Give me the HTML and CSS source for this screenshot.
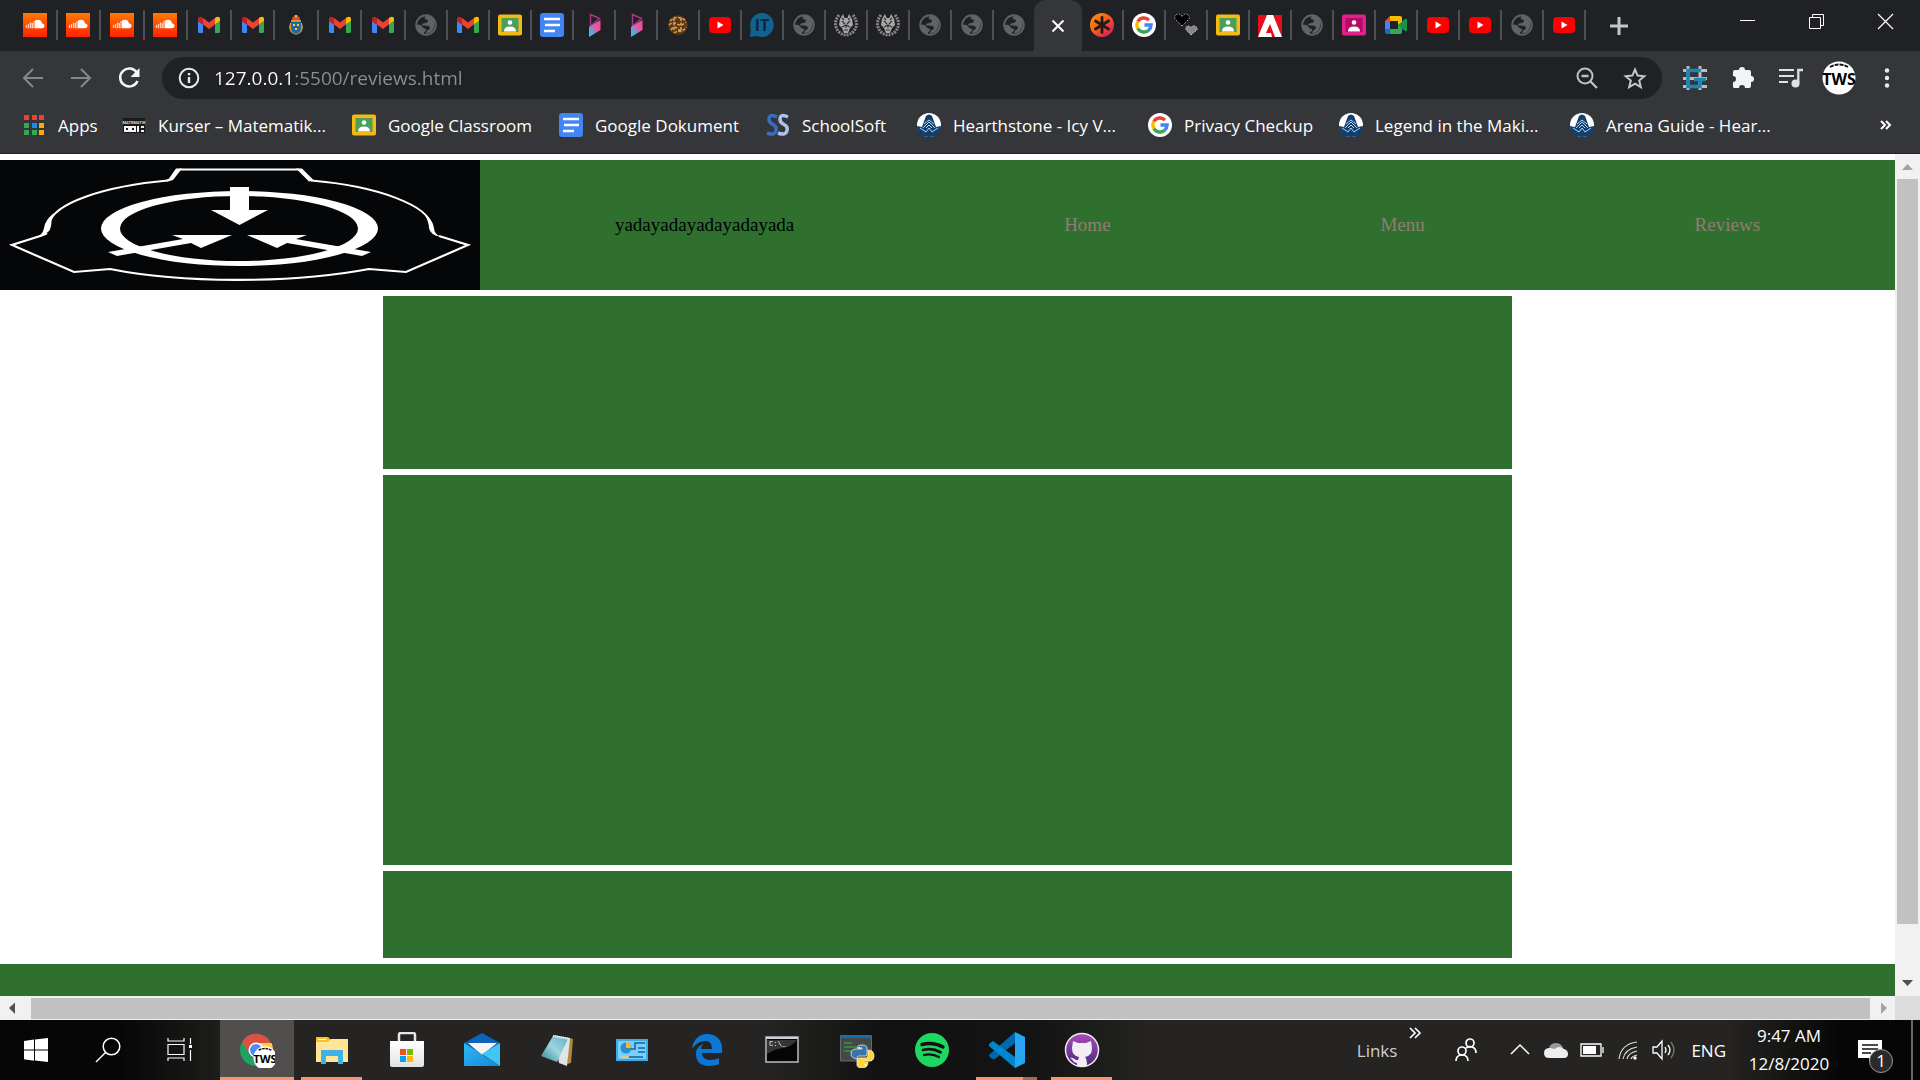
FILE: index.html
```html
<!DOCTYPE html>
<html lang="en">
<head>
<meta charset="utf-8">
<meta name="viewport" content="width=device-width, initial-scale=1">
<title>Reviews</title>
<link rel="stylesheet" href="styles.css">
</head>
<body>
<svg class="sprite" aria-hidden="true">
  <defs>
    <linearGradient id="g-sc" x1="0" y1="0" x2="0" y2="1"><stop offset="0" stop-color="#ff7a00"/><stop offset="1" stop-color="#ff2000"/></linearGradient>
    <linearGradient id="g-prism" x1="1" y1="0" x2="0" y2="1"><stop offset=".35" stop-color="#f0509a"/><stop offset=".9" stop-color="#2cc4ee"/></linearGradient>
    <linearGradient id="g-ast" x1="0" y1="0" x2="1" y2="1"><stop offset="0" stop-color="#ffa000"/><stop offset=".5" stop-color="#f4581f"/><stop offset="1" stop-color="#c60f6c"/></linearGradient>
    <linearGradient id="g-mail" x1="0" y1="0" x2="1" y2="1"><stop offset="0" stop-color="#30b8f2"/><stop offset="1" stop-color="#1487dc"/></linearGradient>
    <linearGradient id="g-note" x1="0" y1="1" x2="1" y2="0"><stop offset="0" stop-color="#2c8592"/><stop offset=".5" stop-color="#9bd6df"/><stop offset="1" stop-color="#5fb0bd"/></linearGradient>
    <linearGradient id="g-git" x1="0" y1="0" x2="0" y2="1"><stop offset="0" stop-color="#a94bb8"/><stop offset="1" stop-color="#4c2a80"/></linearGradient>
    <linearGradient id="g-bag" x1="0" y1="0" x2="0" y2="1"><stop offset="0" stop-color="#fff"/><stop offset="1" stop-color="#e2e2e2"/></linearGradient>
    <symbol id="i-sc" viewBox="0 0 24 24"><path fill="url(#g-sc)" d="M0 0h24v24H0z"/><path fill="#fff" d="M12 7.500c4-2 6.700 0 7 3 1.500-.2 2.500.8 2.500 2.200 0 1.500-1 2.500-2.500 2.500h-7z"/><path stroke="#fff" stroke-opacity=".75" stroke-width="1.300" d="M3.500 12v3M5.500 11v4.300M7.500 9.500v5.800M9.300 10v5.300M11 8v7.300"/></symbol>
    <symbol id="i-gmail" viewBox="0 0 24 24"><path fill="#4285f4" d="M1 8l5 3.500V20H2.500Q1 20 1 18.500z"/><path fill="#34a853" d="M18 11.500L23 8v10.500q0 1.500-1.500 1.500H18z"/><path fill="#c5221f" d="M1 8V6c0-2 2-3 4-1.700l1 .8v6.400z"/><path fill="#fbbc04" d="M23 8V6c0-2-2-3-4-1.700l-1 .8v6.400z"/><path fill="#ea4335" d="M6 5l6 4.500L18 5v6.500L12 16l-6-4.500z"/></symbol>
    <symbol id="i-crest" viewBox="0 0 24 24"><path fill="#d94a36" d="M8 6q0-3 4-3t4 3l-1 2H9z"/><path d="M12 2v3M10.500 3h3M7 8h10" stroke="#e8b63a" stroke-width="1.500"/><path fill="#c59a33" d="M6 10l2-1h8l2 1 1 4-1 4-2 2-4 2-4-2-2-2-1-4z"/><path fill="#1d6aa0" d="M7 9h10v7q-1 4-5 5-4-1-5-5z"/><path fill="#f6cd47" d="M9 11h2v2H9zm4 0h2v2h-2zm-2 4h2v2h-2z"/></symbol>
    <symbol id="i-globe" viewBox="0 0 24 24"><circle cx="12" cy="12" r="9.800" fill="none" stroke="#5f6368" stroke-width="1.900"/><path fill="#5f6368" d="M13 2q-3 2-2 4l3 1q0 3-3 3l-3 1q0 2 3 1.500l4 .5 1 2q-1 2-3 2.500l-1 3q6 0 8-6.500 2-7-3-10-2-2-4-2zM2 12q4-1 6 1l1 2 3 1v2l-2 1v3q-7-2-8-10z"/></symbol>
    <symbol id="i-class" viewBox="0 0 24 24"><rect y="1.500" width="24" height="21" rx="2" fill="#f4b912"/><path fill="#4b9f5b" d="M3.500 5h17v14h-17z"/><circle cx="12" cy="9.500" r="2.300" fill="#fff"/><path fill="#fff" d="M6 18.500q0-5 6-5t6 5z"/></symbol>
    <symbol id="i-pclass" viewBox="0 0 24 24"><rect y="1.500" width="24" height="21" rx="2" fill="#e0218a"/><path fill="#b10b68" d="M3.500 5h17v14h-17z"/><circle cx="12" cy="9.500" r="2.300" fill="#fff"/><path fill="#fff" d="M6 18.500q0-5 6-5t6 5z"/></symbol>
    <symbol id="i-docs" viewBox="0 0 24 24"><rect width="24" height="24" rx="3" fill="#4285f4"/><path stroke="#fff" stroke-width="2.500" d="M4 6h16M5 12h15M4 18h11"/></symbol>
    <symbol id="i-prism" viewBox="0 0 24 24"><path fill="none" stroke="#a8367f" stroke-width="1.500" d="M8.500 1.500v11.500l9-7.500z"/><path fill="url(#g-prism)" d="M18.500 7v10L7 24V14z"/></symbol>
    <symbol id="i-cookie" viewBox="0 0 24 24"><circle cx="12" cy="12" r="9.800" fill="#5d3818"/><path fill="none" stroke="#d7a55c" stroke-width="1.500" stroke-dasharray="3 1.500" d="M4 8q8-7 16 0M3 12q4-4 8-1t9-2M5 17q3-5 7-1t8-2M8 20q4-3 8-1M8 5v13M15 5v14"/></symbol>
    <symbol id="i-yt" viewBox="0 0 24 24"><rect x="1" y="4" width="22" height="16" rx="4" fill="#f00"/><path fill="#fff" d="M9.500 8.500v7l6-3.500z"/></symbol>
    <symbol id="i-it" viewBox="0 0 24 24"><path fill="#10628f" d="M12 0a12 12 0 1 1-5 23l-7 1 .8-8A12 12 0 0 1 12 0z"/><text x="12" y="18" text-anchor="middle" font-family="Open Sans, sans-serif" font-weight="700" font-size="16" fill="#10263a">IT</text></symbol>
    <symbol id="i-wreath" viewBox="0 0 24 24"><path fill="none" stroke="#888" stroke-width="3" stroke-dasharray="2 1" d="M5 2q-7 9 0 17 7 6 14 0 7-8 0-17"/><path fill="#a8a8a8" d="M6 6l3-5 1.500 4h3L15 1l3 5 1 6-3 3-2 5h-4l-2-5-3-3z"/><path fill="none" stroke="#303236" stroke-width="1.200" d="M8 8l3 3M16 8l-3 3M12 12v3M8 14l4-2 4 2M10 17h4M8 5l2 2M16 5l-2 2"/></symbol>
    <symbol id="i-ast" viewBox="0 0 24 24"><circle cx="12" cy="12" r="12" fill="url(#g-ast)"/><path stroke="#26191c" stroke-width="2.800" stroke-linecap="round" d="M12 4.500v15M5.500 8l13 8M18.500 8l-13 8"/></symbol>
    <symbol id="i-g" viewBox="0 0 24 24"><circle cx="12" cy="12" r="12" fill="#fff"/><g fill="none" stroke-width="3.400"><path stroke="#ea4335" d="M5.900 8.500A7 7 0 0 1 17 7.100"/><path stroke="#fbbc05" d="M5.900 8.500a7 7 0 0 0 0 7"/><path stroke="#34a853" d="M5.900 15.500A7 7 0 0 0 16.700 17.200"/><path stroke="#4285f4" d="M12.500 12h6.600a7 7 0 0 1-2.500 5.200"/></g></symbol>
    <symbol id="i-hearts" viewBox="0 0 24 24"><path fill="#000" stroke="#ddd" stroke-dasharray="1 1.500" d="M8 13L1 6q-1-4 3-5 3 0 4 3 1-3 4-3 4 1 3 5z"/><path fill="#888" stroke="#ddd" stroke-dasharray="1 1.500" d="M17 22l-5-5q-1-4 2-4 3 0 3 2 1-3 4-2 3 1 2 4z"/></symbol>
    <symbol id="i-adobe" viewBox="0 0 24 24"><path fill="#e1101c" d="M0 2h24v22H0z"/><path fill="#fff" d="M9 2h6l9 22h-7l-5-13-4 9h5l1 4H0z"/></symbol>
    <symbol id="i-meet" viewBox="0 0 24 24"><path fill="#fbbc04" d="M6 3h10q2 0 2 2v6l-4 3V8H6z"/><path fill="#ea4335" d="M6 3v5H1z"/><path fill="#4285f4" d="M1 8h5v8H1z"/><path fill="#1967d2" d="M1 16h5v5H3q-2 0-2-2z"/><path fill="#34a853" d="M6 16h8v-4l4-1v8q0 2-2 2H6z"/><path fill="#159447" d="M14 12l7-6q2-1 2 1v10q0 2-2 1z"/></symbol>
    <symbol id="i-apps" viewBox="0 0 24 24"><path fill="#ea4335" d="M2 2h5v5H2zm8 0h5v5h-5zm7 0h5v5h-5z"/><path fill="#34a853" d="M2 10h5v5H2zm0 7h5v5H2zm8 0h5v5h-5z"/><path fill="#1e88f5" d="M10 10h5v5h-5z"/><path fill="#fbab09" d="M17 10h5v5h-5zm0 7h5v5h-5z"/></symbol>
    <symbol id="i-mat" viewBox="0 0 24 24"><path fill="#191919" d="M1 5h22v15H1z"/><text x="12" y="11" text-anchor="middle" font-family="Roboto, sans-serif" font-weight="700" font-size="4" fill="#ddd">MATEMATIK</text><path fill="none" stroke="#f4f4f4" stroke-width="2" d="M3 14h4v4H3zM9 14h4v4H9zM16 13v6M19 14h3M19 18h3"/></symbol>
    <symbol id="i-ss" viewBox="0 0 24 24"><g fill="none" stroke-width="3.500"><path stroke="#3b6dbf" d="M11 4Q3 0 3 6.500q0 3 4 5t3 6Q9 23 1 20"/><path stroke="#a9c3ea" d="M22 4q-8-4-8 2.500 0 3 4 5t3 6Q20 23 12 20"/></g></symbol>
    <symbol id="i-icy" viewBox="0 0 24 24"><circle cx="12" cy="12" r="12" fill="#fff"/><path fill="#103f70" d="M0 13l5 1 4-11q3-3 6 0l4 11 5-1q0 11-12 11T0 13z"/><path fill="none" stroke="#b8d4ec" stroke-width="1" d="M7 11l5-4 5 4M6 15l6-6 6 6M9 15l3-3 3 3M3 15l6 4 3-4 3 4 6-4"/></symbol>
    <symbol id="i-tws" viewBox="0 0 34 34"><circle cx="17" cy="17" r="16.500" fill="#fff"/><path fill="none" stroke="#111" stroke-width="2" stroke-dasharray="4 1" d="M8 6q9-5 18 0"/><text x="17" y="24" text-anchor="middle" font-family="Liberation Sans Narrow, Open Sans, sans-serif" font-weight="700" font-size="16" fill="#000">TWS</text></symbol>
  </defs>
</svg>

<div class="screen">
  <header class="browser">
    <div class="tabstrip">
      <div class="tabs tabs-wide">
        <button class="tab" aria-label="SoundCloud"><svg><use href="#i-sc"/></svg></button>
        <button class="tab" aria-label="SoundCloud"><svg><use href="#i-sc"/></svg></button>
        <button class="tab" aria-label="SoundCloud"><svg><use href="#i-sc"/></svg></button>
        <button class="tab" aria-label="SoundCloud"><svg><use href="#i-sc"/></svg></button>
        <button class="tab" aria-label="Gmail"><svg><use href="#i-gmail"/></svg></button>
        <button class="tab" aria-label="Gmail"><svg><use href="#i-gmail"/></svg></button>
        <button class="tab" aria-label="Crest"><svg><use href="#i-crest"/></svg></button>
        <button class="tab" aria-label="Gmail"><svg><use href="#i-gmail"/></svg></button>
        <button class="tab" aria-label="Gmail"><svg><use href="#i-gmail"/></svg></button>
      </div>
      <div class="tabs">
        <button class="tab" aria-label="Page"><svg><use href="#i-globe"/></svg></button>
        <button class="tab" aria-label="Gmail"><svg><use href="#i-gmail"/></svg></button>
        <button class="tab" aria-label="Classroom"><svg><use href="#i-class"/></svg></button>
        <button class="tab" aria-label="Document"><svg><use href="#i-docs"/></svg></button>
        <button class="tab" aria-label="Prism"><svg><use href="#i-prism"/></svg></button>
        <button class="tab" aria-label="Prism"><svg><use href="#i-prism"/></svg></button>
        <button class="tab" aria-label="Cookie"><svg><use href="#i-cookie"/></svg></button>
        <button class="tab" aria-label="YouTube"><svg><use href="#i-yt"/></svg></button>
        <button class="tab" aria-label="IT"><svg><use href="#i-it"/></svg></button>
        <button class="tab" aria-label="Page"><svg><use href="#i-globe"/></svg></button>
        <button class="tab" aria-label="Wreath"><svg><use href="#i-wreath"/></svg></button>
        <button class="tab" aria-label="Wreath"><svg><use href="#i-wreath"/></svg></button>
        <button class="tab" aria-label="Page"><svg><use href="#i-globe"/></svg></button>
        <button class="tab" aria-label="Page"><svg><use href="#i-globe"/></svg></button>
        <button class="tab tab-last" aria-label="Page"><svg><use href="#i-globe"/></svg></button>
      </div>
      <button class="tab-active" aria-label="Close tab"><svg viewBox="0 0 24 24"><path stroke="#fff" stroke-width="2.200" d="M6 6l12 12M18 6L6 18"/></svg></button>
      <div class="tabs">
        <button class="tab" aria-label="Asterisk"><svg><use href="#i-ast"/></svg></button>
        <button class="tab" aria-label="Google"><svg><use href="#i-g"/></svg></button>
        <button class="tab" aria-label="Hearts"><svg><use href="#i-hearts"/></svg></button>
        <button class="tab" aria-label="Classroom"><svg><use href="#i-class"/></svg></button>
        <button class="tab" aria-label="Adobe"><svg><use href="#i-adobe"/></svg></button>
        <button class="tab" aria-label="Page"><svg><use href="#i-globe"/></svg></button>
        <button class="tab" aria-label="Classroom"><svg><use href="#i-pclass"/></svg></button>
        <button class="tab" aria-label="Meet"><svg><use href="#i-meet"/></svg></button>
        <button class="tab" aria-label="YouTube"><svg><use href="#i-yt"/></svg></button>
        <button class="tab" aria-label="YouTube"><svg><use href="#i-yt"/></svg></button>
        <button class="tab" aria-label="Page"><svg><use href="#i-globe"/></svg></button>
        <button class="tab" aria-label="YouTube"><svg><use href="#i-yt"/></svg></button>
      </div>
      <button class="new-tab" aria-label="New tab"><svg viewBox="0 0 24 24"><path stroke="#c4c7ca" stroke-width="3" d="M12 3v18M3 12h18"/></svg></button>
      <div class="window-controls">
        <button aria-label="Minimize"><svg viewBox="0 0 24 24"><path stroke="#fff" d="M4 11.500h15"/></svg></button>
        <button aria-label="Restore"><svg viewBox="0 0 24 24"><path fill="none" stroke="#fff" d="M4.500 8.500h11v11h-11zM7.500 8.500v-3h11v11h-3"/></svg></button>
        <button aria-label="Close"><svg viewBox="0 0 24 24"><path stroke="#fff" stroke-width="1.200" d="M4 5l15 15M19 5L4 20"/></svg></button>
      </div>
    </div>

    <div class="toolbar">
      <nav class="history" aria-label="History">
        <button aria-label="Back"><svg viewBox="0 0 24 24"><path fill="none" stroke="#86888b" stroke-width="2" d="M22 12H3M12 3l-9 9 9 9"/></svg></button>
        <button aria-label="Forward"><svg viewBox="0 0 24 24"><path fill="none" stroke="#86888b" stroke-width="2" d="M2 12h19M12 3l9 9-9 9"/></svg></button>
        <button aria-label="Reload"><svg viewBox="0 0 24 24"><path fill="none" stroke="#f4f5f6" stroke-width="2.500" d="M20 7A9 9 0 1 0 20.500 15"/><path fill="#f4f5f6" d="M22.500 2v9h-9z"/></svg></button>
      </nav>
      <form class="omnibox">
        <svg class="info" viewBox="0 0 24 24"><circle cx="12" cy="12" r="9.300" fill="none" stroke="#e8eaed" stroke-width="2"/><path stroke="#e8eaed" stroke-width="2.400" d="M12 11v6M12 7v2.200"/></svg>
        <input class="url" type="text" aria-label="Address" value="127.0.0.1:5500/reviews.html">
        <button type="button" aria-label="Zoom"><svg viewBox="0 0 24 24"><circle cx="10" cy="10" r="7.500" fill="none" stroke="#bdc1c6" stroke-width="2"/><path stroke="#bdc1c6" stroke-width="2.300" d="M15.500 15.500L22 22M6.500 10h7"/></svg></button>
        <button type="button" aria-label="Bookmark"><svg viewBox="0 0 24 24"><path fill="none" stroke="#c4c7ca" stroke-width="2" d="M12 3.500l2.600 6.100 6.700.6-5.100 4.400 1.600 6.500-5.800-3.500-5.800 3.500 1.600-6.500-5.100-4.400 6.700-.6z"/></svg></button>
      </form>
      <div class="extensions">
        <button aria-label="Grid extension"><svg viewBox="0 0 24 24"><path stroke="#b8c0c4" stroke-width="3" d="M0 4.500h24M0 12.500h24M0 20.500h24M5 0v24M17 0v24"/><path fill="none" stroke="#1b86b8" stroke-width="3.500" d="M18 4.500H5v16h12v-7M11 13.500h12"/></svg></button>
        <button aria-label="Extensions"><svg viewBox="0 0 24 24"><path fill="#f1f3f4" d="M8 4a3 3 0 0 1 6 0h4q2 0 2 2v4a3 3 0 0 1 0 6v4q0 2-2 2h-4a3 3 0 0 0-6 0H3q-1 0-1-2v-4a3 3 0 0 0 0-6V6q0-2 2-2z"/></svg></button>
        <button aria-label="Media"><svg viewBox="0 0 24 24"><path stroke="#dfe1e4" stroke-width="2" d="M0 4h15M0 10h15M0 16h9"/><circle cx="16.500" cy="17.500" r="4" fill="#dfe1e4"/><path fill="none" stroke="#dfe1e4" stroke-width="2.300" d="M19.300 17.500V4H24"/></svg></button>
        <button class="avatar" aria-label="Profile"><svg><use href="#i-tws"/></svg></button>
        <button aria-label="Menu"><svg viewBox="0 0 24 24"><g fill="#e8eaed"><circle cx="12" cy="4.500" r="2.200"/><circle cx="12" cy="12" r="2.200"/><circle cx="12" cy="19.500" r="2.200"/></g></svg></button>
      </div>
    </div>

    <nav class="bookmarks" aria-label="Bookmarks">
      <a href="#"><svg><use href="#i-apps"/></svg>Apps</a>
      <a href="#"><svg><use href="#i-mat"/></svg>Kurser – Matematik...</a>
      <a href="#"><svg><use href="#i-class"/></svg>Google Classroom</a>
      <a href="#"><svg><use href="#i-docs"/></svg>Google Dokument</a>
      <a href="#"><svg><use href="#i-ss"/></svg>SchoolSoft</a>
      <a href="#"><svg><use href="#i-icy"/></svg>Hearthstone - Icy V...</a>
      <a href="#"><svg><use href="#i-g"/></svg>Privacy Checkup</a>
      <a href="#"><svg><use href="#i-icy"/></svg>Legend in the Maki...</a>
      <a href="#"><svg><use href="#i-icy"/></svg>Arena Guide - Hear...</a>
      <button class="more" aria-label="More bookmarks"><svg viewBox="0 0 24 24"><path fill="none" stroke="#fff" stroke-width="2" d="M8 8l4 4-4 4M13 8l4 4-4 4"/></svg></button>
    </nav>
  </header>

  <div class="viewport">
    <main class="page">
      <header class="site-header">
        <svg class="logo" viewBox="0 0 480 130" preserveAspectRatio="none" role="img" aria-label="Logo">
          <path fill="#050608" d="M0 0h480v130H0z"/>
          <path fill="none" stroke="#fff" stroke-width="2" d="M179 9.500H299"/>
          <path fill="#fff" d="M176 8.500h6L173 20l-5 1.500-3-1 4-2zM296 8.500h6l12 12-5 1z"/>
          <path fill="none" stroke="#fff" stroke-width="2" d="M168 20.500C105 26 53 43 49 64M311 20.500C378 26 430 46 431 66"/>
          <path fill="#fff" d="M54 53Q45 60 44 68q-1 5-4 7 10-1 11-9 0-6 3-13zM424 53q5 9 5 15 1 7 12 9-7-3-7-9-1-8-10-15z"/>
          <path fill="none" stroke="#fff" stroke-width="2.200" d="M47 73Q44 75 37 77L12 85 74 112 110 109C180 123 290 124 369 109L406 112 468 85 439 76"/>
          <path fill="#fff" fill-rule="evenodd" d="M101 68.500a138.500 37.500 0 1 0 277 0a138.500 37.500 0 1 0-277 0zM120 68.500a119 32.500 0 1 0 238 0a119 32.500 0 1 0-238 0z"/>
          <path fill="#fff" d="M230 27h19v23h19L239.500 65 211 50h19z"/>
          <path fill="#fff" d="M172 75h60l-31 13-10-5-74 13-9-4 75-13zM307 75h-60l30 13 10-5 75 13 9-4-75-13z"/>
        </svg>
        <nav class="site-nav">
          <span>yadayadayadayadayada</span>
          <a href="#">Home</a>
          <a href="#">Menu</a>
          <a href="#">Reviews</a>
        </nav>
      </header>
      <section class="block"></section>
      <section class="block"></section>
      <section class="block"></section>
      <footer class="site-footer"></footer>
    </main>
    <div class="vscroll">
      <svg viewBox="0 0 24 24"><path fill="#a3a3a3" d="M7 16l5.500-6 5.500 6z"/></svg>
      <div class="vtrack"><div class="vthumb"></div></div>
      <svg viewBox="0 0 24 24"><path fill="#505050" d="M7 8l5.500 6L18 8z"/></svg>
    </div>
    <div class="hscroll">
      <svg viewBox="0 0 24 24"><path fill="#505050" d="M15 6.500L9 12l6 6z"/></svg>
      <div class="hthumb"></div>
      <svg viewBox="0 0 24 24"><path fill="#a3a3a3" d="M10 6.500l6 5.500-6 6z"/></svg>
    </div>
    <div class="corner"></div>
  </div>

  <footer class="taskbar">
    <div class="system">
      <button aria-label="Start"><svg viewBox="0 0 36 36"><path fill="#fff" d="M6 9l10-1.500V17.500H6zM17 7.400L30 6v11.500H17zM6 18.500h10v10.200L6 27.300zM17 18.500h13V30l-13-1.500z"/></svg></button>
      <button aria-label="Search"><svg viewBox="0 0 36 36"><circle cx="21.500" cy="14.500" r="8.300" fill="none" stroke="#fff" stroke-width="1.500"/><path stroke="#fff" stroke-width="1.500" d="M15.500 20.500L6 30"/></svg></button>
      <button aria-label="Task view"><svg viewBox="0 0 36 36"><path fill="none" stroke="#fff" stroke-width="1.200" d="M6 6v3h16V6M6 29v-3h16v3M6 12.500h16v10H6zM28.500 6v6M28.500 18v11"/><path fill="#fff" d="M27 13h3v3h-3z"/></svg></button>
    </div>
    <div class="apps">
      <button class="current" aria-label="Chrome"><svg viewBox="0 0 36 36"><circle cx="17" cy="18" r="16" fill="#1ea362"/><path fill="#dd5144" d="M3 10a16 16 0 0 1 29 2H17L11 22z"/><path fill="#ffcd46" d="M20 11h12.500A16 16 0 0 1 18 34l7-14z"/><circle cx="17" cy="18" r="7.500" fill="#fff"/><circle cx="17" cy="18" r="6" fill="#4c8bf5"/><svg x="14" y="14" width="24" height="24"><use href="#i-tws"/></svg></svg></button>
      <button class="open" aria-label="File Explorer"><svg viewBox="0 0 36 36"><path fill="#f9bd2e" d="M2 5h12l3 3v6H2z"/><path fill="#ffe596" d="M2 10h12l3-3h17v23H2z"/><path fill="#fff" d="M4 7h8v1H4z"/><path fill="#3db2e6" d="M7 18h22v14h-5v-8H12v8H7z"/></svg></button>
      <button aria-label="Store"><svg viewBox="0 0 36 36"><path fill="none" stroke="#e6e6e6" stroke-width="2.500" d="M10 12V2.500q0-1.500 2-1.500h12q2 0 2 1.500V12"/><path fill="url(#g-bag)" d="M1 9h34v24q0 2-2 2H3q-2 0-2-2z"/><path fill="#f25022" d="M11 17h6v6h-6z"/><path fill="#7fba00" d="M18 17h6v6h-6z"/><path fill="#00a4ef" d="M11 24h6v6h-6z"/><path fill="#ffb900" d="M18 24h6v6h-6z"/></svg></button>
      <button aria-label="Mail"><svg viewBox="0 0 36 36"><path fill="#0e62b8" d="M0 11L18 1l18 10-5 9H5z"/><path fill="#f4f4f4" d="M4 11h29L18 23z"/><path fill="url(#g-mail)" d="M0 11l36 23H0z"/><path fill="#40c6f5" d="M36 11v23L18 22z"/></svg></button>
      <button aria-label="Notepad"><svg viewBox="0 0 36 36"><path fill="#b48740" d="M30 6l4 1-2 24-4 1z"/><path fill="#dfe5e6" d="M15 3l16 3-3 28-8-3z"/><path fill="url(#g-note)" d="M14 4l15 3-11 23-16-6z"/><path stroke="#eee" stroke-width="2" stroke-dasharray="1 1" d="M14 4l16 3"/></svg></button>
      <button aria-label="Control Panel"><svg viewBox="0 0 36 36"><path fill="#40aae4" d="M2 7h32v22H2z"/><path fill="#79d0ff" d="M4 9h28v18H4z"/><circle cx="12" cy="16" r="5.500" fill="#278ed0"/><path fill="#fdb62d" d="M12 16v-6a6 6 0 0 1 5 6z"/><path fill="none" stroke="#185f95" stroke-width="1.500" d="M17 17h4v-6h4M24 11h7M24 16h7M24 20h7M15 25h14"/><path stroke="#e6cb77" stroke-width="2" d="M7 25h8"/></svg></button>
      <button aria-label="Edge"><svg viewBox="0 0 36 36"><path fill="#0b78d8" d="M3 17C4 7 11 2 18 2c9 0 15 6 15 14v5H13c0 5 4 7 8 7 4 0 7-1 9-2v6c-3 1-6 2-10 2-9 0-13-5-13-12 0-5 3-8 7-10-1 2-2 3-2 5h11c0-5-2-8-7-8-6 0-10 4-13 8z"/></svg></button>
      <button aria-label="Command Prompt"><svg viewBox="0 0 36 36"><path fill="#050505" stroke="#b9bdc5" stroke-width="1.500" d="M2 5h32v25H2z"/><path stroke="#ccd0d6" stroke-width="2" d="M2 6h32"/><path fill="#555" fill-opacity=".6" d="M3 8h30q-6 7-14 8T3 22z"/><text x="5" y="14" font-family="Liberation Mono, monospace" font-size="7" fill="#fff">C:\_</text></svg></button>
      <button aria-label="Python"><svg viewBox="0 0 36 36"><path fill="#454748" stroke="#686868" d="M1.500 4h31v25h-31z"/><path fill="#0d6fb5" d="M1 3h32v3H1z"/><path stroke="#329c36" stroke-width="1.300" d="M5 11h8M5 15h12M5 19h8"/><g stroke="#fff" stroke-width=".7"><path fill="#3875a9" d="M18 16q0-3 5-3t5 3v6q0 2-2 2h-6q-2 0-2 3-6-1-6-5 0-5 5-5h6v-1z"/><path fill="#ffd43b" d="M29 18q6 0 6 6 0 5-5 5h-6v1h5q0 6-6 6t-5-5v-3q0-2 3-2h6q2 0 2-3z"/></g><circle cx="20.500" cy="16" r="1" fill="#fff"/><circle cx="26.500" cy="33" r="1" fill="#fff"/></svg></button>
      <button aria-label="Spotify"><svg viewBox="0 0 36 36"><circle cx="18" cy="18" r="17" fill="#1ed760"/><g fill="none" stroke="#121212" stroke-linecap="round"><path stroke-width="3.400" d="M8 12.500q11-3 21 2.500"/><path stroke-width="2.800" d="M9 18q9-2.500 17.500 2.200"/><path stroke-width="2.300" d="M10 23q8-2 15 2"/></g></svg></button>
      <button class="open stacked" aria-label="Visual Studio Code"><svg viewBox="0 0 36 36"><path fill="#0069ad" d="M0 23L26 0v11L6 27q-3 1-6-3z"/><path fill="#0086d1" d="M0 12l4-3 22 16v11L0 14z"/><path fill="#26a5f2" d="M26 0l10 5v26l-10 5z"/></svg></button>
      <button class="open" aria-label="GitHub"><svg viewBox="0 0 36 36"><circle cx="18" cy="18" r="16.500" fill="url(#g-git)" stroke="#eee" stroke-width="1.500"/><path fill="#f1eef4" d="M9 9l5 2h8l5-2 1 7q0 8-7 9 2 2 2 9H13v-3c-4 0-4-4-7-5 4-1 5 3 8 2l1-3q-7-1-7-9z"/></svg></button>
    </div>
    <div class="tray">
      <span class="links">Links</span>
      <button class="tray-more" aria-label="More links"><svg viewBox="0 0 24 24"><path fill="none" stroke="#fff" stroke-width="1.700" d="M7 7l5 5-5 5M12 7l5 5-5 5"/></svg></button>
      <button class="people" aria-label="People"><svg viewBox="0 0 24 24"><g fill="none" stroke="#fff" stroke-width="1.700"><circle cx="16" cy="5" r="4"/><circle cx="8" cy="13" r="4"/><path d="M2 23q0-6 6-6t6 6M12 10q3-2 6-1 4 1 4 6"/></g></svg></button>
      <button aria-label="Hidden icons"><svg viewBox="0 0 24 24"><path fill="none" stroke="#fff" stroke-width="1.500" d="M3 16l9-9 9 9"/></svg></button>
      <button aria-label="OneDrive"><svg viewBox="0 0 24 24"><path fill="#999" d="M5 12q0-7 7-7 5 0 7 5z"/><path fill="#eee" d="M0 15q0-5 6-5l5 1q4-4 9 0 4 1 4 5t-4 4H5q-5 0-5-5z"/></svg></button>
      <button aria-label="Battery"><svg viewBox="0 0 24 24"><path fill="none" stroke="#fff" stroke-width="1.300" d="M1 6h20v12H1zM23 9v6"/><path fill="#fff" d="M3 8h13v8H3z"/></svg></button>
      <button aria-label="Wi-Fi"><svg viewBox="0 0 24 24"><g fill="none" stroke="#ddd" stroke-width="1.200"><path d="M3 21Q5 6 21 4M7 21q2-10 14-12M11 21q1-6 10-8M15 21q1-3 6-4"/></g><circle cx="19" cy="20" r="1.700" fill="#fff"/></svg></button>
      <button aria-label="Volume"><svg viewBox="0 0 24 24"><g fill="none" stroke="#fff" stroke-width="1.300"><path d="M1 9h4l5-6v18l-5-6H1zM13 9q2 3 0 6M16 7q4 5 0 10"/><path stroke="#777" d="M19 4q6 8 0 16"/></g></svg></button>
      <span class="lang">ENG</span>
      <div class="clock"><time>9:47 AM</time><time>12/8/2020</time></div>
      <button class="notifications" aria-label="Notifications"><svg viewBox="0 0 24 24"><path fill="#fff" d="M0 2h24v18h-9l-4 5v-5H0z"/><path stroke="#111" stroke-width="1.300" d="M4 7h16M4 11h16M4 15h9"/></svg><span class="badge">1</span></button>
    </div>
  </footer>
</div>
</body>
</html>
```
FILE: styles.css
```css
* { box-sizing: border-box; }

body {
  margin: 0;
  font-family: "Open Sans", "Noto Sans", sans-serif;
  font-size: 17px;
  color: #fff;
}

button {
  display: flex;
  align-items: center;
  justify-content: center;
  padding: 0;
  border: 0;
  background: none;
  color: inherit;
  font: inherit;
}

svg {
  display: block;
  flex: none;
  width: 24px;
  height: 24px;
}

.sprite {
  position: absolute;
  width: 0;
  height: 0;
}

.screen {
  display: flex;
  flex-direction: column;
  min-height: 100vh;
}

/* Browser chrome */

.browser {
  background: #35363a;
  border-bottom: 1px solid #222326;
}

.tabstrip {
  display: flex;
  height: 51px;
  padding-left: 14px;
  background: #202124;
}

.tabs { display: flex; }

.tabs-wide {
  display: grid;
  grid-template-columns: repeat(9, 1fr);
  width: 392px;
}

.tab {
  width: 42px;
  height: 30px;
  margin-top: 10px;
  border-right: 2px solid #4e5054;
}

.tabs-wide .tab { width: auto; }

.tab-last {
  width: 40px;
  border: 0;
}

.tab-active {
  width: 48px;
  background: #35363a;
  border-radius: 12px 12px 0 0;
}

.tab-active svg { width: 22px; height: 22px; }

.new-tab { width: 66px; }

.window-controls {
  display: flex;
  margin-left: auto;
}

.window-controls button {
  width: 69px;
  height: 42px;
}

.toolbar {
  display: flex;
  align-items: center;
  height: 54px;
  padding: 0 9px;
}

.history {
  display: flex;
  width: 153px;
}

.history button { width: 48px; }

.omnibox {
  display: flex;
  flex: 1;
  align-items: center;
  height: 42px;
  padding: 0 3px 0 15px;
  border-radius: 21px;
  background: #202124;
}

.url {
  flex: 1;
  min-width: 0;
  margin-left: 13px;
  padding: 0;
  border: 0;
  background: linear-gradient(90deg, #fff 80px, #8c8f93 80px) text;
  color: transparent;
  font: inherit;
  font-size: 19px;
}

.omnibox button { width: 48px; }

.extensions {
  display: flex;
  margin-left: 9px;
}

.extensions button { width: 48px; }

.avatar svg { width: 34px; height: 34px; }

.bookmarks {
  display: grid;
  grid-template-columns: 100px 230px 207px 207px 151px 231px 191px 231px 1fr 24px;
  align-items: center;
  height: 48px;
  padding: 0 23px 8px 22px;
}

.bookmarks a {
  display: flex;
  align-items: center;
  gap: 12px;
  color: #fff;
  text-decoration: none;
  white-space: nowrap;
}

/* Web page shown in the window */

.viewport {
  display: grid;
  flex: 1;
  grid-template-columns: 1fr 25px;
  grid-template-rows: 1fr 24px;
  background: #fff;
}

.page {
  display: grid;
  grid-template-columns: 1fr 3fr 1fr;
  grid-template-rows: 130px 4fr 9fr 2fr 32px;
  gap: 6px;
  padding-top: 6px;
  font-family: "Liberation Serif", serif;
  font-size: 19px;
}

.site-header {
  display: flex;
  grid-column: 1 / -1;
  background: #2f702e;
  color: #000;
}

.logo { width: 480px; height: 130px; }

.site-nav {
  display: flex;
  flex: 1;
  align-items: center;
  justify-content: space-around;
}

.site-nav a {
  color: #917c75;
  text-decoration: none;
}

.block {
  grid-column: 2;
  background: #2f702e;
}

.site-footer {
  grid-column: 1 / -1;
  background: #2f702e;
}

.vscroll {
  display: flex;
  flex-direction: column;
  background: #f1f1f1;
}

.vtrack {
  flex: 1;
  padding: 1px 2px 0;
}

.vthumb {
  height: 94%;
  background: #c1c1c1;
}

.hscroll {
  display: flex;
  align-items: center;
  background: #f1f1f1;
}

.hthumb {
  flex: 1;
  height: 21px;
  margin: 0 1px 0 7px;
  background: #c1c1c1;
}

.corner { background: #dcdcdc; }

/* Taskbar */

.taskbar {
  display: flex;
  height: 60px;
  background: linear-gradient(90deg, #060606 6%, #252422 13%, #252422 40%, #111 46%, #141414 54%, #252422 60%, #252422 90%, #060606 96%);
}

.system,
.apps { display: flex; }

.system { margin-right: 4px; }

.system button { width: 72px; }

.apps button {
  width: 75px;
  border-bottom: 3px solid transparent;
  padding-top: 3px;
}

.taskbar .system svg,
.taskbar .apps button > svg {
  width: 36px;
  height: 36px;
}

.apps .current {
  width: 74px;
  background: #504f4d;
  border-color: #fc9270;
}

.apps .open {
  background: linear-gradient(#fc9270, #fc9270) center bottom / 61px 3px no-repeat border-box;
}

.apps .stacked {
  background: linear-gradient(90deg, #fc9270 47px, #a86850 47px) center bottom / 61px 3px no-repeat border-box;
}

.tray {
  display: flex;
  align-items: center;
  margin-left: auto;
  padding-right: 7px;
}

.tray button { width: 36px; }

.links { color: #d0d0d0; }

.tray .tray-more {
  align-self: flex-start;
  margin-top: 1px;
}

.tray .people {
  width: 54px;
  margin: 0 9px 0 6px;
}

.lang { margin-left: 9px; }

.clock {
  display: flex;
  flex-direction: column;
  align-items: center;
  width: 126px;
  line-height: 28px;
}

.tray .notifications {
  position: relative;
  align-self: stretch;
  justify-content: flex-start;
  width: 61px;
  padding-left: 6px;
  border-right: 2px solid #666;
}

.badge {
  position: absolute;
  left: 17px;
  top: 29px;
  width: 24px;
  height: 24px;
  border: 1px solid #999;
  border-radius: 12px;
  background: #2b2b2b;
  line-height: 22px;
}
```
